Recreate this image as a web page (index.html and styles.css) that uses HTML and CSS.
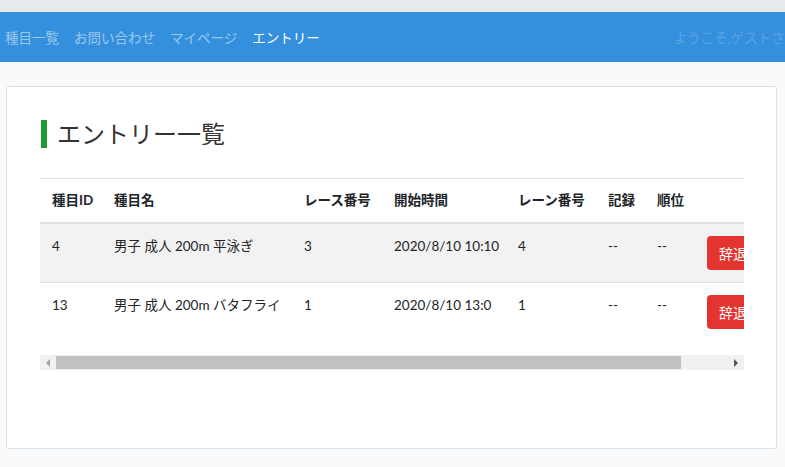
FILE: index.html
```html
<!DOCTYPE html>
<html lang="ja">
<head>
<meta charset="utf-8">
<title>エントリー一覧</title>
<link rel="stylesheet" href="styles.css">
</head>
<body>
<div class="topstrip"></div>
<nav class="navbar">
  <ul class="nav-links">
    <li><a href="#">種目一覧</a></li>
    <li><a href="#">お問い合わせ</a></li>
    <li><a href="#">マイページ</a></li>
    <li><a href="#" class="active">エントリー</a></li>
  </ul>
  <div class="welcome">ようこそ,ゲストさん</div>
</nav>
<main class="main">
  <section class="card">
    <h1 class="title">エントリー一覧</h1>
    <div class="table-wrap">
      <table class="table">
        <colgroup>
          <col class="c-id"><col class="c-name"><col class="c-race"><col class="c-time"><col class="c-lane"><col class="c-rec"><col class="c-rank"><col class="c-act">
        </colgroup>
        <thead>
          <tr><th>種目ID</th><th>種目名</th><th>レース番号</th><th>開始時間</th><th>レーン番号</th><th>記録</th><th>順位</th><th></th></tr>
        </thead>
        <tbody>
          <tr class="striped"><td>4</td><td>男子 成人 200m 平泳ぎ</td><td>3</td><td>2020/8/10 10:10</td><td>4</td><td>--</td><td>--</td><td><button class="btn-danger">辞退する</button></td></tr>
          <tr><td>13</td><td>男子 成人 200m バタフライ</td><td>1</td><td>2020/8/10 13:0</td><td>1</td><td>--</td><td>--</td><td><button class="btn-danger">辞退する</button></td></tr>
        </tbody>
      </table>
    </div>
    <div class="scrollbar">
      <div class="sb-btn sb-left"><span class="tri-left"></span></div>
      <div class="sb-thumb"></div>
      <div class="sb-rest"><span class="tri-right"></span></div>
    </div>
  </section>
</main>
</body>
</html>
```
FILE: styles.css
```css
* { box-sizing: border-box; }
html, body { margin: 0; padding: 0; }
body {
  background: #f8fafc;
  font-family: Lato, "Noto Sans CJK JP", sans-serif;
  color: #212529;
  font-size: 14px;
  overflow: hidden;
  width: 785px;
  height: 467px;
}
.topstrip { height: 12px; background: #e8ebee; }
.navbar {
  height: 50px;
  background: #3490dc;
  display: flex;
  align-items: center;
  justify-content: space-between;
  padding-left: 5px;
  overflow: hidden;
  white-space: nowrap;
}
.nav-links {
  list-style: none;
  margin: 0;
  padding: 0;
  display: flex;
  gap: 15px;
}
.nav-links a {
  color: rgba(255,255,255,.5);
  text-decoration: none;
  font-size: 13.5px;
}
.nav-links a.active { color: #fff; }
.welcome {
  color: rgba(255,255,255,.2);
  font-size: 13.5px;
  margin-right: -13px;
}
.main { padding: 24px 8px 0 6px; }
.card {
  background: #fff;
  border: 1px solid #dfe2e5;
  border-radius: 3px;
  height: 363px;
  padding: 33px 0 0 33px;
}
.title {
  margin: 0 0 30px 1px;
  border-left: 6px solid #1e9a30;
  padding-left: 10px;
  font-size: 24px;
  font-weight: 400;
  line-height: 28px;
  color: #333;
}
.table-wrap {
  width: 704px;
  overflow: hidden;
}
.table {
  border-collapse: collapse;
  table-layout: fixed;
  width: 775px;
  white-space: nowrap;
}
.c-id { width: 62px; }
.c-name { width: 190px; }
.c-race { width: 90px; }
.c-time { width: 124px; }
.c-lane { width: 90px; }
.c-rec { width: 49px; }
.c-rank { width: 50px; }
.c-act { width: 120px; }
.table th, .table td {
  padding: 12px;
  text-align: left;
  vertical-align: top;
  border-top: 1px solid #dee2e6;
  line-height: 20px;
}
.table th {
  font-weight: 700;
  font-size: 13.5px;
  line-height: 19px;
  border-bottom: 2px solid #dee2e6;
  color: #212529;
}
.table td { line-height: 20px; font-size: 13.5px; }
.table tr.striped td { background: #f2f2f2; }
.btn-danger {
  background: #e3342f;
  color: #fff;
  border: none;
  border-radius: 4px;
  height: 34px;
  padding: 0 12px;
  font-family: inherit;
  font-size: 14px;
  display: block;
}
.scrollbar {
  margin-top: 14px;
  width: 704px;
  height: 15px;
  background: #f1f1f1;
  display: flex;
}
.sb-btn { width: 16px; display: flex; align-items: center; justify-content: center; }
.sb-thumb { width: 625px; background: #c1c1c1; margin: 1px 0; }
.sb-rest { flex: 1; display: flex; align-items: center; justify-content: flex-end; padding-right: 6px; }
.tri-left {
  width: 0; height: 0;
  border-top: 4px solid transparent;
  border-bottom: 4px solid transparent;
  border-right: 4px solid #a3a3a3;
}
.tri-right {
  width: 0; height: 0;
  border-top: 4px solid transparent;
  border-bottom: 4px solid transparent;
  border-left: 4px solid #505050;
}
```
